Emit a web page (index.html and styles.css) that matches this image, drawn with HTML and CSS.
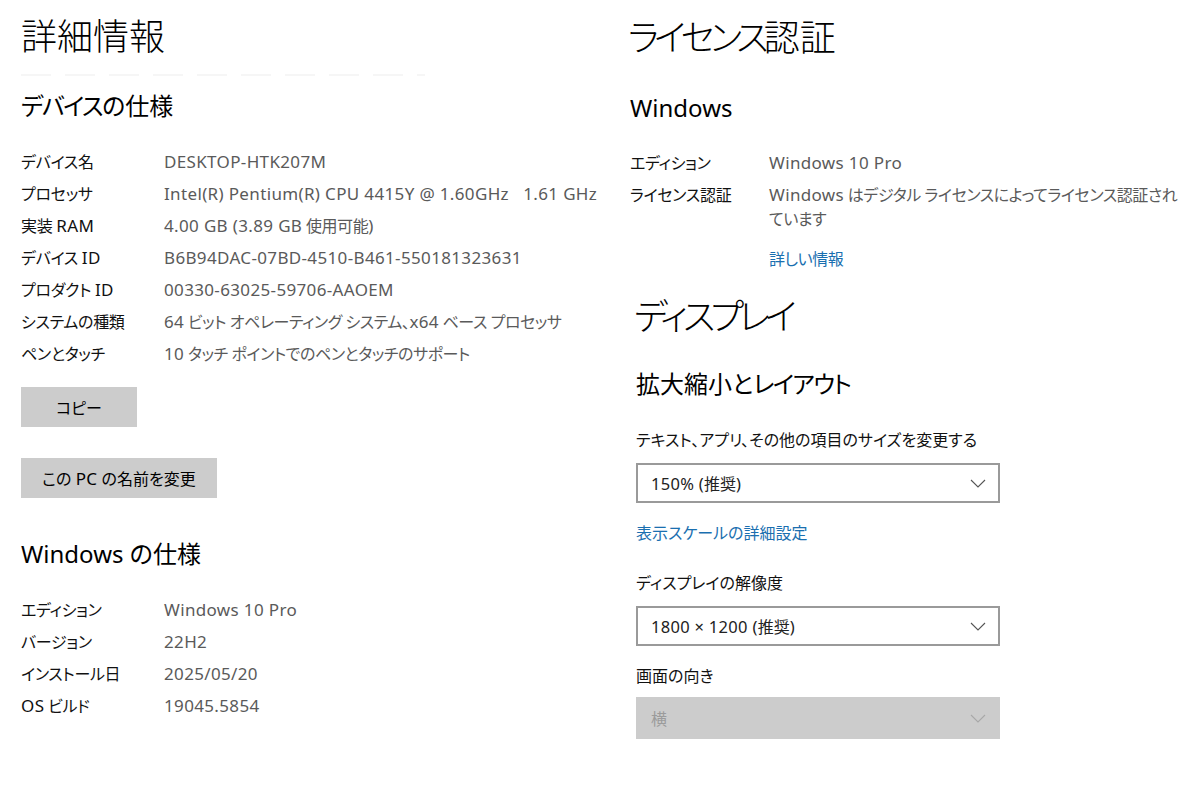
FILE: index.html
```html
<!DOCTYPE html>
<html lang="ja">
<head>
<meta charset="utf-8">
<title>詳細情報</title>
<link rel="stylesheet" href="styles.css">
</head>
<body>
<div class="page">
  <section class="col col-left">
    <h1 class="title">詳細情報</h1>
    <div class="rule"></div>
    <h2 class="sub sub-device"><span class="kana">デバイス</span>の仕様</h2>
    <dl class="specs">
      <div class="row"><dt>デバイス名</dt><dd><span class="en">DESKTOP-HTK207M</span></dd></div>
      <div class="row"><dt>プロセッサ</dt><dd><span class="en">Intel(R) Pentium(R) CPU 4415Y @ 1.60GHz&nbsp;&nbsp;&nbsp;1.61 GHz</span></dd></div>
      <div class="row"><dt>実装 <span class="en">RAM</span></dt><dd><span class="en">4.00 GB (3.89 GB</span> 使用可能<span class="en">)</span></dd></div>
      <div class="row"><dt>デバイス <span class="en">ID</span></dt><dd><span class="en">B6B94DAC-07BD-4510-B461-550181323631</span></dd></div>
      <div class="row"><dt>プロダクト <span class="en">ID</span></dt><dd><span class="en">00330-63025-59706-AAOEM</span></dd></div>
      <div class="row"><dt>システムの種類</dt><dd><span class="en">64</span> ビット オペレーティング システム、<span class="en">x64</span> ベース プロセッサ</dd></div>
      <div class="row"><dt>ペンとタッチ</dt><dd><span class="en">10</span> タッチ ポイントでのペンとタッチのサポート</dd></div>
    </dl>
    <div class="btn-stack">
      <button class="btn btn-copy">コピー</button>
      <button class="btn btn-rename">この <span class="en">PC</span> の名前を変更</button>
    </div>
    <h2 class="sub sub-win">Windows の仕様</h2>
    <dl class="specs">
      <div class="row"><dt>エディション</dt><dd><span class="en">Windows 10 Pro</span></dd></div>
      <div class="row"><dt>バージョン</dt><dd><span class="en">22H2</span></dd></div>
      <div class="row"><dt>インストール日</dt><dd><span class="en">2025/05/20</span></dd></div>
      <div class="row"><dt><span class="en">OS</span> ビルド</dt><dd><span class="en">19045.5854</span></dd></div>
    </dl>
  </section>

  <section class="col col-right">
    <h1 class="title"><span class="kana">ライセンス</span>認証</h1>
    <h2 class="sub sub-windows">Windows</h2>
    <dl class="specs specs-lic">
      <div class="row"><dt>エディション</dt><dd><span class="en">Windows 10 Pro</span></dd></div>
      <div class="row"><dt>ライセンス認証</dt><dd><span class="en">Windows</span> はデジタル ライセンスによってライセンス認証され<br>ています</dd></div>
      <div class="row row-link"><dt></dt><dd><a class="link" href="#">詳しい情報</a></dd></div>
    </dl>

    <div class="display">
      <h1 class="title"><span class="kana">ディスプレイ</span></h1>
      <h2 class="sub sub-scale">拡大縮小と<span class="kana">レイアウト</span></h2>
      <p class="label label-first">テキスト、アプリ、その他の項目のサイズを変更する</p>
      <div class="select">
        <span><span class="en">150% (</span>推奨<span class="en">)</span></span>
        <svg class="chev" width="16" height="9" viewBox="0 0 16 9"><polyline points="1,1 8,8 15,1" fill="none" stroke="#555" stroke-width="1.1"/></svg>
      </div>
      <a class="link link-scale" href="#">表示スケールの詳細設定</a>
      <p class="label">ディスプレイの解像度</p>
      <div class="select">
        <span><span class="en">1800 × 1200 (</span>推奨<span class="en">)</span></span>
        <svg class="chev" width="16" height="9" viewBox="0 0 16 9"><polyline points="1,1 8,8 15,1" fill="none" stroke="#555" stroke-width="1.1"/></svg>
      </div>
      <p class="label">画面の向き</p>
      <div class="select select-disabled">
        <span>横</span>
        <svg class="chev" width="16" height="9" viewBox="0 0 16 9"><polyline points="1,1 8,8 15,1" fill="none" stroke="#a8a8a8" stroke-width="1.1"/></svg>
      </div>
    </div>
  </section>
</div>
</body>
</html>
```
FILE: styles.css
```css
* { box-sizing: border-box; }

html, body {
  margin: 0;
  padding: 0;
  background: #ffffff;
}

body {
  font-family: "Noto Sans", "Noto Sans CJK JP", sans-serif;
  font-feature-settings: "palt";
  color: #111;
  width: 1200px;
  height: 786px;
  overflow: hidden;
}

.page {
  display: flex;
}

.col-left {
  width: 628px;
  padding-left: 21px;
  padding-top: 14px;
}

.col-right {
  width: 572px;
  padding-top: 15px;
}

.en {
  font-size: 17px;
  letter-spacing: 0.35px;
}

.title {
  margin: 0;
  font-size: 36px;
  line-height: 40px;
  font-weight: 300;
  color: #000;
  font-family: "Noto Sans CJK JP", "Noto Sans", sans-serif;
}

.title .kana { letter-spacing: -5px; }

.rule {
  margin-top: 20px;
  width: 404px;
  height: 2px;
  background: repeating-linear-gradient(90deg, #f6f6f6 0 30px, transparent 30px 44px);
}

.sub {
  margin: 0;
  font-size: 24px;
  line-height: 32px;
  font-weight: 400;
  color: #000;
}

.sub .kana { letter-spacing: -1.5px; }

.sub-device { margin-top: 14px; }

.specs {
  margin: 24px 0 0;
  padding: 0;
}

.row {
  display: flex;
  padding: 4px 0;
  font-size: 16px;
  line-height: 24px;
}

.row dt {
  width: 143px;
  flex: none;
  color: #111;
  letter-spacing: -0.3px;
}

.row dd {
  margin: 0;
  color: #5a5a5a;
  letter-spacing: -0.45px;
}

.row .en { letter-spacing: 0.35px; }

.btn-stack {
  display: flex;
  flex-direction: column;
  align-items: flex-start;
  gap: 31px;
  margin-top: 17px;
}

.btn {
  height: 40px;
  border: none;
  background: #cccccc;
  font-family: inherit;
  font-feature-settings: "palt";
  font-size: 16px;
  color: #000;
  padding: 0;
}

.btn-copy { width: 116px; }
.btn-rename { width: 196px; }

.sub-win { margin-top: 40px; }

/* right column */
.col-right .specs { margin-top: 23px; }
.sub-windows { margin-top: 37px; padding-left: 2px; }
.specs-lic .row { padding-left: 2px; }
.specs-lic .row dt { width: 139px; }
.row-link { margin-top: 8px; }

.link {
  color: #1a6fb0;
  text-decoration: none;
}

.display {
  padding-left: 6px;
  margin-top: 19px;
}

.sub-scale {
  margin-top: 34px;
  padding-left: 2px;
}

.label {
  margin: 0;
  padding-left: 2px;
  font-size: 16px;
  line-height: 24px;
  color: #111;
}

.label-first { margin-top: 28px; }

.select {
  margin: 11px 0 0 2px;
  width: 364px;
  height: 40px;
  border: 2px solid #9a9a9a;
  display: flex;
  align-items: center;
  justify-content: space-between;
  padding: 0 12px 0 13px;
  font-size: 16px;
  color: #222;
}

.select .en { font-size: 16.5px; letter-spacing: 0.3px; }

.select-disabled {
  margin-top: 9px;
  border-color: #cccccc;
  background: #cccccc;
  color: #9b9b9b;
  height: 42px;
}

.link-scale {
  display: block;
  margin: 18px 0 0 2px;
  font-size: 16px;
  line-height: 24px;
}

.link-scale + .label { margin-top: 26px; }
.select + .label { margin-top: 18px; }
.chev { display: block; }
```
